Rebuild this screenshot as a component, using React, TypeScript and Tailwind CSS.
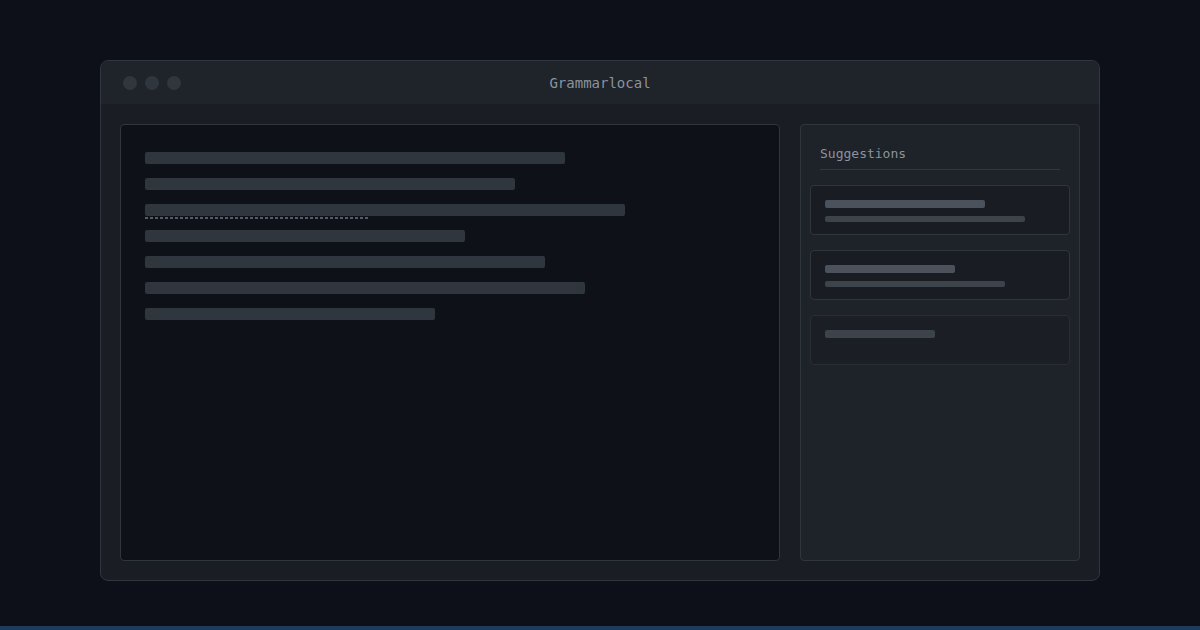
const lines = [420, 370, 480, 320, 400, 440, 290];

type Suggestion = {
    title: number;
    detail?: number;
    dim?: boolean;
};

const suggestions: Suggestion[] = [
    { title: 160, detail: 200 },
    { title: 130, detail: 180 },
    { title: 110, dim: true },
];

function Editor() {
    return (
        <div className="w-[660px] h-full rounded border border-[#30363d] bg-[#0e1118] pl-[24px] pt-[27px]">
            <div className="flex flex-col gap-[14px]">
                {lines.map((w, i) => (
                    <div key={i} className="relative h-[12px]" style={{ width: w }}>
                        <div className="h-full w-full rounded-[2px] bg-[#30363d]" />
                        {i === 2 && (
                            <svg className="absolute left-0 top-[13px]" width="224" height="2">
                                <line x1="0" y1="1" x2="224" y2="1" stroke="#6e7681" strokeWidth="1.5" strokeDasharray="3 2" />
                            </svg>
                        )}
                    </div>
                ))}
            </div>
        </div>
    );
}

function Sidebar() {
    return (
        <div className="w-[280px] h-full rounded border border-[#30363d] bg-[#1e2229] px-[9px]">
            <div className="mx-[10px] pt-[19px] pb-[5px] border-b border-[#30363d] text-[13px] leading-[20px] text-[#8b949e] font-['DejaVu_Sans_Mono',monospace]">
                Suggestions
            </div>

            <div className="mt-[15px] flex flex-col gap-[15px]">
                {suggestions.map((s, i) => (
                    <div
                        key={i}
                        className={
                            s.dim
                                ? "h-[50px] rounded border border-[#292d34] bg-[#1b1e24] px-[14px] pt-[14px]"
                                : "h-[50px] rounded border border-[#30363d] bg-[#191c22] px-[14px] pt-[14px]"
                        }
                    >
                        <div
                            className={s.dim ? "h-[8px] rounded-[2px] bg-[#3d434b]" : "h-[8px] rounded-[2px] bg-[#4b525b]"}
                            style={{ width: s.title }}
                        />
                        {s.detail && (
                            <div className="mt-[8px] h-[6px] rounded-[2px] bg-[#3d434b]" style={{ width: s.detail }} />
                        )}
                    </div>
                ))}
            </div>
        </div>
    );
}

export default function App() {
    return (
        <div className="h-[630px] w-[1200px] bg-[#0d1018] flex flex-col">
            <div className="mx-[100px] mt-[60px] h-[521px] rounded-lg border border-[#30363d] bg-[#1a1d23] overflow-hidden flex flex-col">
                <div className="h-[43px] bg-[#1f232a] grid grid-cols-[1fr_auto_1fr] items-center">
                    <div className="flex gap-[8px] pl-[22px]">
                        <span className="w-[14px] h-[14px] rounded-full bg-[#30363d]" />
                        <span className="w-[14px] h-[14px] rounded-full bg-[#30363d]" />
                        <span className="w-[14px] h-[14px] rounded-full bg-[#30363d]" />
                    </div>
                    <span className="mt-[2px] text-[14px] text-[#8b949e] font-['DejaVu_Sans_Mono',monospace]">
                        Grammarlocal
                    </span>
                    <div />
                </div>

                <div className="flex-1 flex gap-[20px] px-[19px] pt-[20px] pb-[19px]">
                    <Editor />
                    <Sidebar />
                </div>
            </div>

            <div className="flex-1" />
            <div className="h-[4px] bg-[#1f3b5c]" />
        </div>
    );
}
